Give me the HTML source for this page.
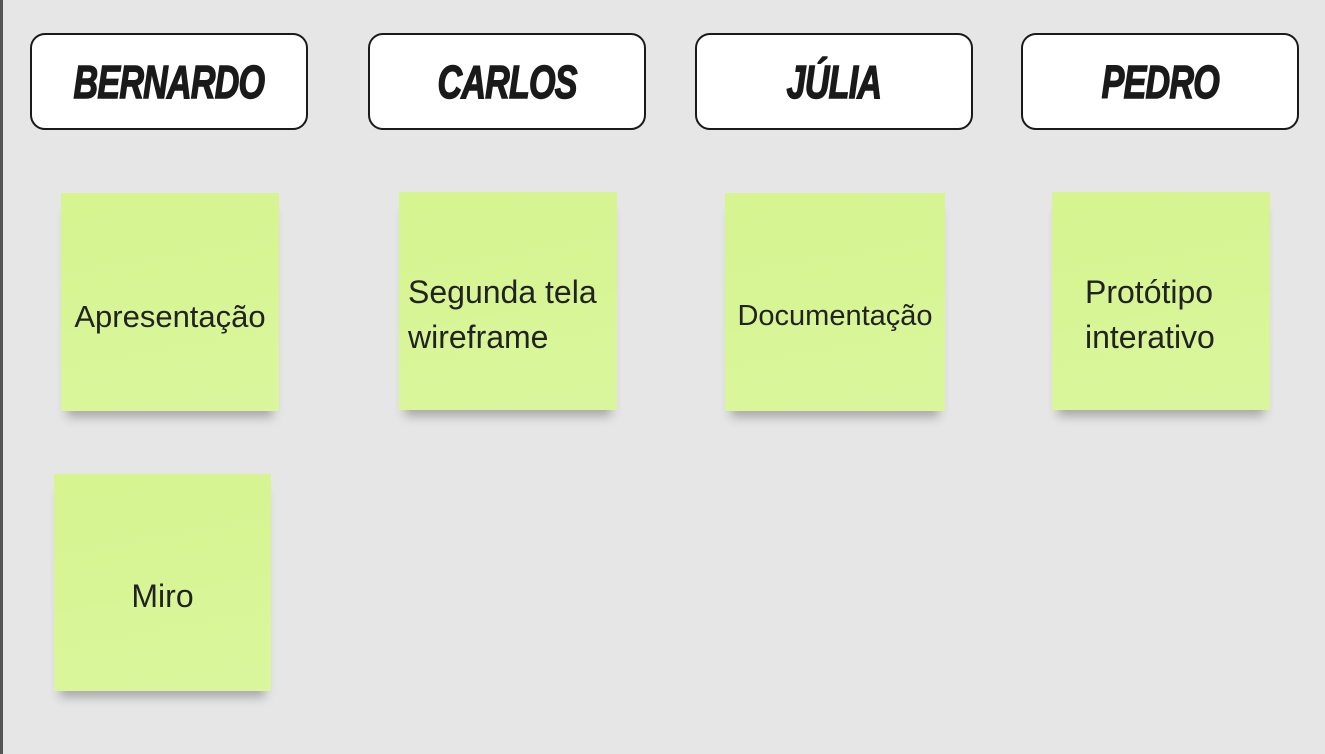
<!DOCTYPE html>
<html><head><style>
body{margin:0;width:1325px;height:754px;background:#e6e6e6;position:relative;overflow:hidden;font-family:"Liberation Sans",sans-serif}
.bl{position:absolute;left:0;top:0;width:3px;height:754px;background:#555}
.h{position:absolute;top:33px;height:93px;width:274px;border:2px solid #1a1a1a;border-radius:15px;background:#fff;display:flex;align-items:center;justify-content:center}
.h span{font-weight:bold;font-style:italic;font-size:46px;color:#1a1a1a;transform:scaleX(.74);display:inline-block;letter-spacing:-1px;-webkit-text-stroke:1.5px #1a1a1a}
.s{position:absolute;box-sizing:border-box;padding-top:28px;width:218px;height:218px;background:linear-gradient(170deg,#d6f48f,#daf69d);display:flex;align-items:center;justify-content:center;text-align:center;font-size:32px;color:#222;box-shadow:0 12px 10px -6px rgba(0,0,0,.28);line-height:45px}
</style></head><body>
<div class="bl"></div>
<div class="h" style="left:30px"><span>BERNARDO</span></div>
<div class="h" style="left:368px"><span>CARLOS</span></div>
<div class="h" style="left:695px"><span>JÚLIA</span></div>
<div class="h" style="left:1021px"><span>PEDRO</span></div>
<div class="s" style="left:61px;top:193px;font-size:31px">Apresentação</div>
<div class="s" style="left:399px;top:192px;justify-content:flex-start;text-align:left;padding-left:9px">Segunda tela<br>wireframe</div>
<div class="s" style="left:725px;top:193px;width:220px;font-size:29px">Documentação</div>
<div class="s" style="left:1052px;top:192px;text-align:left;justify-content:flex-start;padding-left:33px">Protótipo<br>interativo</div>
<div class="s" style="left:54px;top:474px;width:217px;height:217px">Miro</div>
</body></html>
